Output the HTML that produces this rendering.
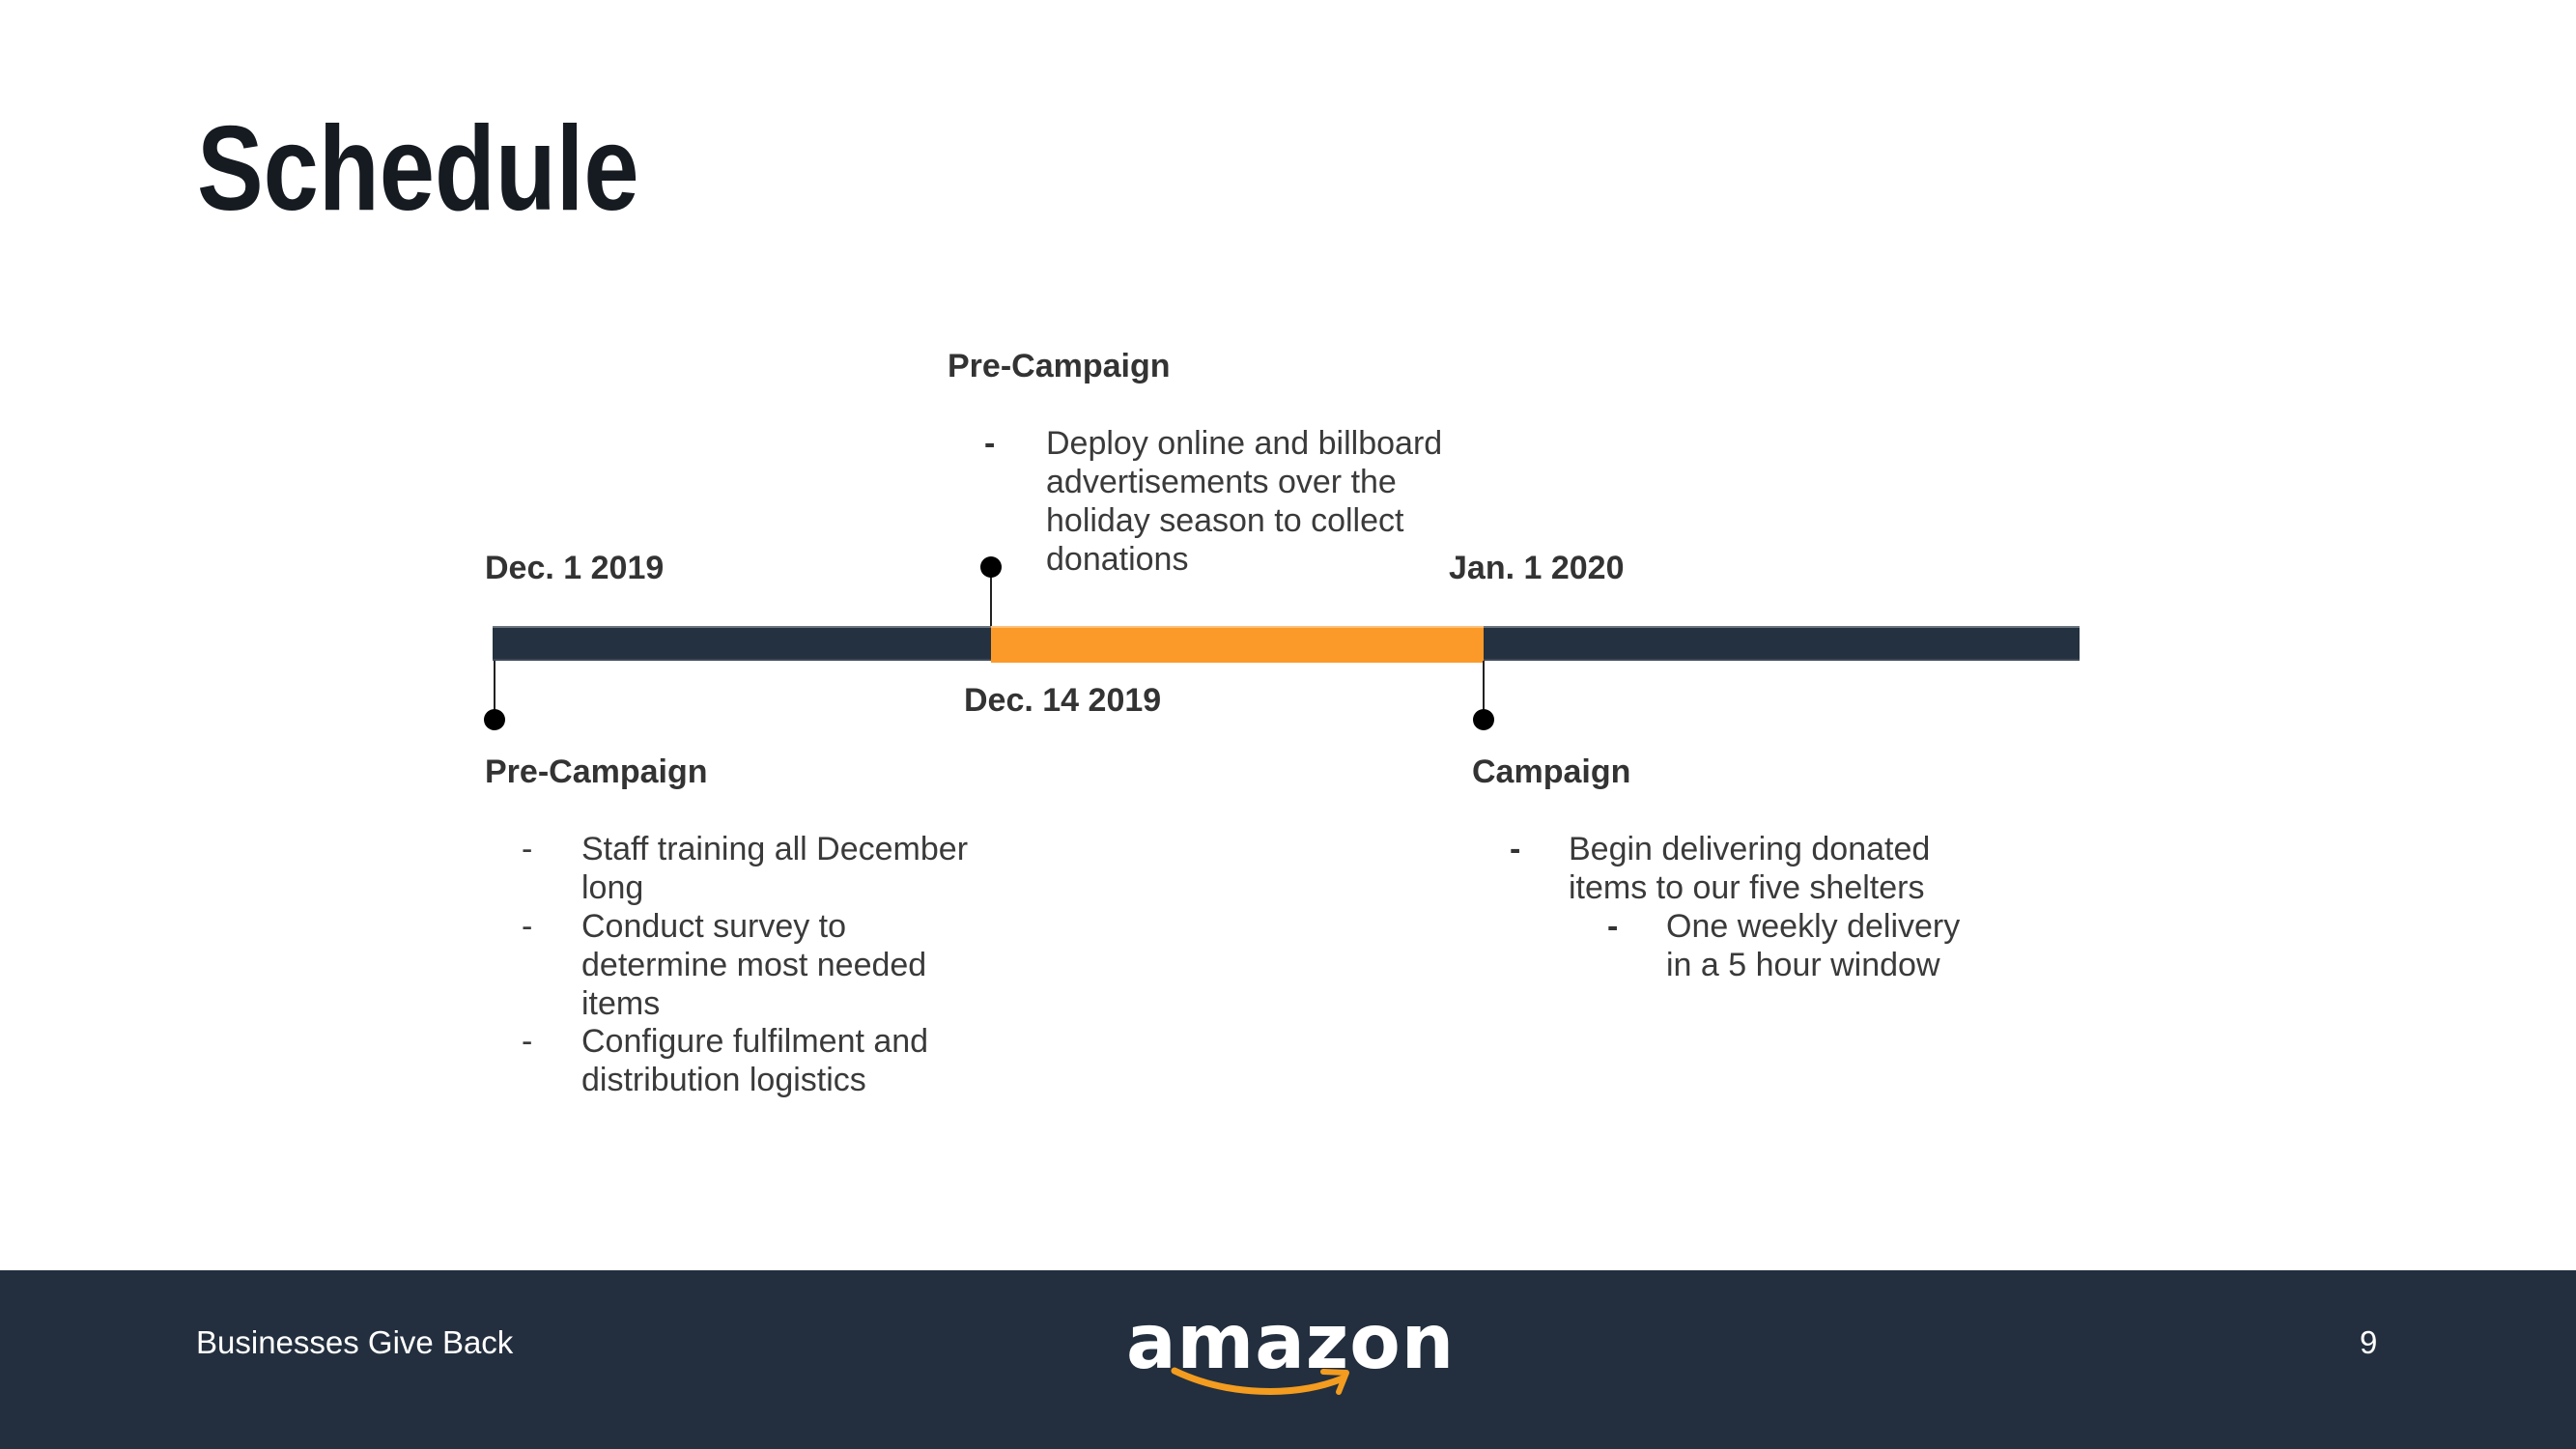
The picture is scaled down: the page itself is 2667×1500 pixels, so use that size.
<!DOCTYPE html>
<html><head><meta charset="utf-8"><style>
html,body{margin:0;padding:0}
body{width:2667px;height:1500px;position:relative;background:#fff;overflow:hidden;font-family:"Liberation Sans",sans-serif;color:#3a3a3a}
.a{position:absolute;white-space:nowrap}
.t{font-size:34px;line-height:40px}
.b{font-size:34px;line-height:40px;font-weight:bold;color:#333}
.dot{position:absolute;width:22px;height:22px;border-radius:50%;background:#000}
.ln{position:absolute;width:2px;background:#222}
</style></head><body>
<div class="a" style="left:204px;top:100px;font-size:124px;line-height:150px;font-weight:bold;color:#161b22;transform:scaleX(0.83);transform-origin:left top">Schedule</div>

<div class="a" style="left:510px;top:648px;width:1643px;height:36px;background:#243140;border-top:2px solid #6b7580;border-bottom:2px solid #3d4855;box-sizing:border-box"></div>
<div class="a" style="left:1026px;top:648px;width:510px;height:36px;background:#fb9a28;border-top:2px solid #fcc07a"></div>

<div class="ln" style="left:1025px;top:587px;height:61px"></div>
<div class="dot" style="left:1015px;top:576px"></div>
<div class="ln" style="left:511px;top:684px;height:61px"></div>
<div class="dot" style="left:501px;top:734px"></div>
<div class="ln" style="left:1535px;top:684px;height:61px"></div>
<div class="dot" style="left:1525px;top:734px"></div>

<div class="a b" style="left:981px;top:359px">Pre-Campaign</div>
<div class="a b" style="left:1019px;top:439px">-</div>
<div class="a t" style="left:1083px;top:439px">Deploy online and billboard<br>advertisements over the<br>holiday season to collect<br>donations</div>

<div class="a b" style="left:502px;top:568px">Dec. 1 2019</div>
<div class="a b" style="left:1500px;top:568px">Jan. 1 2020</div>
<div class="a b" style="left:998px;top:705px">Dec. 14 2019</div>

<div class="a b" style="left:502px;top:779px">Pre-Campaign</div>
<div class="a t" style="left:540px;top:859px">-</div>
<div class="a t" style="left:602px;top:859px">Staff training all December<br>long</div>
<div class="a t" style="left:540px;top:939px">-</div>
<div class="a t" style="left:602px;top:939px">Conduct survey to<br>determine most needed<br>items</div>
<div class="a t" style="left:540px;top:1058px">-</div>
<div class="a t" style="left:602px;top:1058px">Configure fulfilment and<br>distribution logistics</div>

<div class="a b" style="left:1524px;top:779px">Campaign</div>
<div class="a b" style="left:1563px;top:859px">-</div>
<div class="a t" style="left:1624px;top:859px">Begin delivering donated<br>items to our five shelters</div>
<div class="a b" style="left:1664px;top:939px">-</div>
<div class="a t" style="left:1725px;top:939px">One weekly delivery<br>in a 5 hour window</div>

<div class="a" style="left:0;top:1315px;width:2667px;height:185px;background:#232f3e"></div>
<div class="a" style="left:203px;top:1370px;font-size:33px;line-height:40px;color:#fff">Businesses Give Back</div>
<div class="a" style="left:2443px;top:1370px;font-size:33px;line-height:40px;color:#fff">9</div>
<div class="a" style="left:1166px;top:1345px;font-size:78px;line-height:90px;font-weight:bold;color:#fff;letter-spacing:1px;font-family:'DejaVu Sans',sans-serif;transform:scaleX(0.98);transform-origin:left top">amazon</div>
<svg class="a" style="left:1210px;top:1411px" width="190" height="40" viewBox="0 0 190 40">
<path d="M6 8 C60 34 130 36 180 16" stroke="#f39c1f" stroke-width="7" fill="none" stroke-linecap="round"/>
<path d="M160 9 L184 10 L176 30" stroke="#f39c1f" stroke-width="6" fill="none" stroke-linecap="round" stroke-linejoin="round"/>
</svg>
</body></html>
